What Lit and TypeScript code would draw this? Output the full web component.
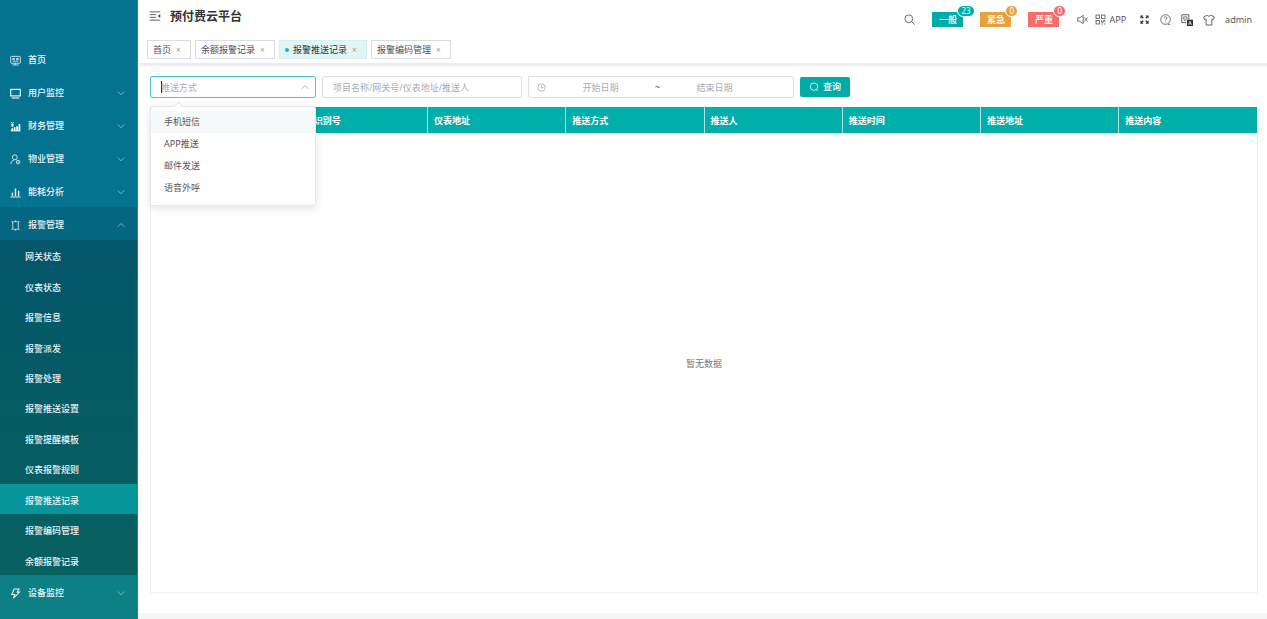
import { LitElement, html, css, svg, nothing, TemplateResult } from "lit";
import { customElement, property } from "lit/decorators.js";
import { classMap } from "lit/directives/class-map.js";

const glyphs: Record<string, TemplateResult> = {
  home: svg`<rect x="1" y="2" width="14" height="10" rx="1"/><path d="M4 5h2.500v2H4zM9.500 5H12v2H9.500zM4 9.500l2-1 2 1 2-1 2 1M8 12v2.300M3.500 14.500h9"/>`,
  screen: svg`<rect x="1" y="2" width="14" height="9.500" stroke-width="1.700"/><path d="M2.500 14.500h11" stroke-width="1.700"/>`,
  finance: svg`<path d="M1.500 1.500l2 2.500 2-2.500M3.500 4v4.500M1.200 5h4.600M1.200 7h4.600M1 14.500h14"/><path d="M2 10.500h2.700v4H2zM5.500 9h2.700v5.500H5.500zM9 7.500h2.700v7H9zM12.400 4.500H15v10h-2.600z" fill="currentColor" stroke="none"/>`,
  person: svg`<circle cx="7" cy="4.800" r="3.500"/><path d="M1.200 14.800c0-3.300 1.800-5.300 4.800-6M9 8l1 1"/><circle cx="11.800" cy="11.800" r="2.600"/><path d="M11.800 10.500v2.500"/>`,
  bars: svg`<path d="M.5 14.500h15" stroke-width="1.400"/><path d="M3.500 13V8M8 13V2M12.500 13V5.500" stroke-width="2"/>`,
  alarm: svg`<path d="M5 2.500h6M5 13.500h6M4 2.500v11M12 2.500v11M2 2.500h2M12 2.500h2M2 13.500h2M12 13.500h2M7 1.500h2M7 14.800h2"/>`,
  bolt: svg`<path d="M6 1.500h7L10.500 6H14L5 14.800 7 9.500H2.500z" stroke-width="1.500"/>`,
  down: svg`<path d="M1.500 5L8 11.500 14.500 5" stroke-width="1.500"/>`,
  up: svg`<path d="M1.500 11.500L8 5l6.500 6.500" stroke-width="1.500"/>`,
  fold: svg`<path d="M1 2.500h14M1 6.200h8.500M1 9.800h8.500M1 13.500h14"/><path d="M15 5.200v5.600L11.500 8z" fill="currentColor" stroke="none"/>`,
  search: svg`<circle cx="7" cy="7" r="5.700"/><path d="M11 11l4.500 4.500"/>`,
  find: svg`<circle cx="8" cy="7.500" r="6"/><path d="M11.500 12l2.500 2.500"/>`,
  mute: svg`<path d="M1 5.500h3l5-3.500v12l-5-3.500H1zM10.500 5l5 6M15.500 5l-5 6"/>`,
  qr: svg`<rect x="1.500" y="1.500" width="5" height="5"/><rect x="9.500" y="1.500" width="5" height="5"/><rect x="1.500" y="9.500" width="5" height="5"/><path d="M9.500 9v3h2.500V9.500h2.500v2M9.500 14.500h2M13 14.500h2"/>`,
  full: svg`<path d="M2 2h4.500L5 3.500 7 5.500 5.500 7l-2-2L2 6.500zM14 2v4.500L12.500 5l-2 2L9 5.500l2-2L9.500 2zM14 14H9.500l1.500-1.500-2-2L10.500 9l2 2L14 9.500zM2 14V9.500L3.500 11l2-2L7 10.500l-2 2L6.500 14z" fill="currentColor" stroke="none"/>`,
  help: svg`<circle cx="8" cy="8" r="7"/><path d="M5.900 6.300c0-2.800 4.200-2.800 4.200-.3 0 1.700-2.100 1.700-2.100 3.300M8 11v1.300M11.500 15h3.500"/>`,
  lang: svg`<path d="M10.500 7V1H1v10.500h6" stroke-width="1"/><path d="M3.500 3.800h4.500v3H3.500zM3.500 9h3" stroke-width=".8"/><rect x="8" y="7.500" width="8" height="8.500" fill="currentColor" stroke="none"/><path d="M10 14.500l2-5 2 5M10.800 13h2.400" stroke="#fff" stroke-width=".9"/>`,
  shirt: svg`<path d="M5.300 1.500L.8 4l1.400 3.500 2-.7v7.900h7.600V6.800l2 .7L15.200 4l-4.500-2.500c-.8 1.900-4.600 1.900-5.400 0z"/>`,
  clock: svg`<circle cx="8" cy="8" r="6.500"/><path d="M8 4v4.300h3.500"/>`,
};

@customElement("ui-icon")
class UiIcon extends LitElement {
  @property() name = "";
  static styles = css`
    :host { display: inline-flex; width: 11px; height: 11px; flex: none; }
    svg { width: 100%; height: 100%; fill: none; stroke: currentColor; stroke-width: 1.2; }
  `;
  render() {
    return html`<svg viewBox="0 0 16 16" aria-hidden="true">${glyphs[this.name]}</svg>`;
  }
}

const menu = [
  { icon: "home", text: "首页", leaf: true },
  { icon: "screen", text: "用户监控" },
  { icon: "finance", text: "财务管理" },
  { icon: "person", text: "物业管理" },
  { icon: "bars", text: "能耗分析" },
  {
    icon: "alarm",
    text: "报警管理",
    children: ["网关状态", "仪表状态", "报警信息", "报警派发", "报警处理", "报警推送设置", "报警提醒模板", "仪表报警规则", "报警推送记录", "报警编码管理", "余额报警记录"],
  },
  { icon: "bolt", text: "设备监控" },
] as { icon: string; text: string; leaf?: boolean; children?: string[] }[];

const current = "报警推送记录";
const tabs = ["首页", "余额报警记录", "报警推送记录", "报警编码管理"];
const alerts = [
  { text: "一般", count: 23, level: "normal" },
  { text: "紧急", count: 0, level: "urgent" },
  { text: "严重", count: 0, level: "severe" },
];
const methods = ["手机短信", "APP推送", "邮件发送", "语音外呼"];
const columns = ["项目名称", "网关识别号", "仪表地址", "推送方式", "推送人", "推送时间", "推送地址", "推送内容"];

@customElement("app-root")
class AppRoot extends LitElement {
  static styles = css`
    * { box-sizing: border-box; }
    :host {
      display: flex;
      min-height: 100vh;
      background: #fff;
      color: #555;
      font: 9px/14px "Noto Sans", "Noto Sans CJK SC", sans-serif;
    }
    button, input, select { font: inherit; color: inherit; margin: 0; border: 0; background: none; padding: 0; outline: 0; border-radius: 0; }
    ul { list-style: none; margin: 0; padding: 0; }
    a { color: inherit; text-decoration: none; }

    .side {
      flex: none;
      width: 138px;
      padding-top: 42px;
      color: #e9f4f6;
      background: linear-gradient(#05728f 0%, #05728f 35%, #0c8084 95%);
      border-right: 1px solid #2b8496;
      font-weight: 500;
    }
    .item { display: flex; align-items: center; gap: 7px; width: 100%; height: 33px; padding: 3px 12px 0 10px; cursor: pointer; text-align: left; }
    .item.open { background: rgba(0, 0, 0, 0.1); }
    .label { flex: 1; }
    .arrow { width: 8px; height: 8px; opacity: 0.7; }
    .sub { display: grid; grid-auto-rows: 1fr; height: 335px; background: linear-gradient(#045669, #08605f); }
    .leaf { display: flex; align-items: center; height: 100%; padding: 4px 0 0 25px; }
    .leaf.on { background: #05959a; }

    .main { flex: 1; min-width: 0; display: flex; flex-direction: column; }
    .top { display: flex; align-items: center; height: 39px; padding: 0 15px 0 11px; }
    .fold { width: 12px; height: 12px; margin-bottom: 7px; }
    .title { margin: 0 auto 6px 9px; font-size: 12px; line-height: 18px; color: #333; font-weight: 600; }
    .search, .alerts, .tools { display: flex; align-items: center; }
    .search { margin-right: 17px; }
    .alerts { gap: 17px; }
    .alert { position: relative; width: 31px; height: 15px; color: #fff; font-weight: 500; line-height: 15px; }
    .count {
      position: absolute; top: -7px; left: 25px; min-width: 12px; height: 12px; padding: 0 3px;
      border: 1px solid #fff; border-radius: 6px; font-size: 8px; line-height: 10px; font-weight: 400;
    }
    .normal, .normal .count { background: #00aca9; }
    .urgent, .urgent .count { background: #e6a23c; }
    .severe, .severe .count { background: #f56c6c; }
    .tools { gap: 10px; margin-left: 18px; }
    .tool { display: flex; align-items: center; gap: 3px; cursor: pointer; }
    .pair { display: flex; gap: 7px; margin-right: 3px; }
    .dark { color: #333; }
    .big { width: 12px; height: 12px; }

    .tabs { display: flex; gap: 4px; height: 24px; padding: 1px 9px 4px; }
    .tab { display: flex; align-items: center; gap: 5px; padding: 0 8px 0 5px; border: 1px solid #d8dce5; color: #495060; }
    .tab.on { background: #e0f5f4; border-color: #d2f0ef; color: #243b46; }
    .dot { width: 4px; height: 4px; border-radius: 50%; background: #1eb5b3; margin-right: -1px; }
    .close { width: 6px; font-size: 8px; line-height: 12px; color: #999; }
    .strip { height: 4px; background: #f5f5f5; border-top: 2px solid #ececec; }

    .page { flex: 1; display: flex; flex-direction: column; padding: 9px 9px 20px 12px; border-bottom: 6px solid #f5f5f5; }
    .filters { display: flex; align-items: center; gap: 6px; height: 22px; margin-bottom: 9px; }
    .field { position: relative; display: flex; align-items: center; height: 22px; padding: 0 10px; border: 1px solid #dcdfe6; border-radius: 2px; }
    .field input { width: 100%; min-width: 0; height: 18px; }
    .field input::placeholder { color: #a8abb2; opacity: 1; }
    .method { width: 166px; padding: 0 6px 0 10px; border-color: #50c6c4; }
    .method .arrow { color: #777; }
    .caret { position: absolute; left: 10px; top: 4px; width: 1px; height: 12px; background: #333; }
    .keyword { width: 200px; }
    .dates { width: 266px; padding: 0 24px 0 8px; }
    .dates input { text-align: center; }
    .clock { width: 9px; height: 9px; color: #999; }
    .query { display: flex; align-items: center; justify-content: center; gap: 4px; width: 50px; height: 20px; border-radius: 2px; background: #00aca9; color: #fff; font-weight: 500; }
    .query ui-icon { width: 10px; height: 10px; }

    .popup { position: absolute; z-index: 2; top: 29px; left: -1px; width: 166px; padding: 4px 0 6px; background: #fff; border: 1px solid #e4e7ed; border-radius: 3px; box-shadow: 0 2px 8px rgba(0, 0, 0, 0.12); }
    .popup::before { content: ""; position: absolute; top: -4px; left: 24px; width: 6px; height: 6px; background: #fff; border: solid #e4e7ed; border-width: 1px 0 0 1px; transform: rotate(45deg); }
    .options { display: block; width: 100%; height: 88px; overflow: hidden; appearance: none; color: #555; }
    .option { height: 22px; min-height: 22px; padding: 4px 13px 0; line-height: 14px; }
    .option.hot { background: #f5f9fa; }

    .board { flex: 1; display: flex; flex-direction: column; border: 1px solid #f0f0f0; border-top: 0; }
    .grid { width: 100%; border-collapse: collapse; table-layout: fixed; background: #00aeaa; }
    .grid th { height: 26px; padding: 2px 6px 0; border-left: 1px solid #b5e2e0; text-align: left; color: #fff; font-weight: 700; }
    .grid th:first-child { border-left: 0; }
    .empty { flex: 1; display: flex; align-items: center; justify-content: center; padding-top: 2px; color: #777; }
  `;

  private item(m: (typeof menu)[number]) {
    return html`<li>
      <button class=${classMap({ item: true, open: !!m.children })}>
        <ui-icon name=${m.icon}></ui-icon><span class="label">${m.text}</span>
        ${m.leaf ? nothing : html`<ui-icon class="arrow" name=${m.children ? "up" : "down"}></ui-icon>`}
      </button>
      ${m.children
        ? html`<ul class="sub">${m.children.map((c) => html`<li><a href="#" class=${classMap({ leaf: true, on: c === current })}>${c}</a></li>`)}</ul>`
        : nothing}
    </li>`;
  }

  render() {
    return html`
      <nav class="side"><ul>${menu.map((m) => this.item(m))}</ul></nav>
      <div class="main">
        <header class="top">
          <ui-icon class="fold" name="fold"></ui-icon>
          <h1 class="title">预付费云平台</h1>
          <button class="search" aria-label="搜索"><ui-icon name="search"></ui-icon></button>
          <div class="alerts">
            ${alerts.map((a) => html`<button class="alert ${a.level}">${a.text}<span class="count">${a.count}</span></button>`)}
          </div>
          <div class="tools">
            <span class="pair">
              <button class="tool" aria-label="静音"><ui-icon name="mute"></ui-icon></button>
              <button class="tool"><ui-icon name="qr"></ui-icon>APP</button>
            </span>
            <button class="tool dark" aria-label="全屏"><ui-icon name="full"></ui-icon></button>
            <button class="tool" aria-label="帮助"><ui-icon name="help"></ui-icon></button>
            <button class="tool dark" aria-label="语言"><ui-icon class="big" name="lang"></ui-icon></button>
            <button class="tool" aria-label="主题"><ui-icon class="big" name="shirt"></ui-icon></button>
            <button class="tool">admin</button>
          </div>
        </header>
        <div class="tabs">
          ${tabs.map((t) => html`<a href="#" class=${classMap({ tab: true, on: t === current })}>
            ${t === current ? html`<span class="dot"></span>` : nothing}<span>${t}</span><span class="close">×</span></a>`)}
        </div>
        <div class="strip"></div>
        <main class="page">
          <form class="filters">
            <div class="field method">
              <input type="text" role="combobox" aria-expanded="true" aria-label="推送方式" placeholder="推送方式" />
              <span class="caret"></span>
              <ui-icon class="arrow" name="up"></ui-icon>
              <div class="popup">
                <select class="options" size="4" aria-label="推送方式">
                  ${methods.map((m, i) => html`<option class=${classMap({ option: true, hot: i === 0 })}>${m}</option>`)}
                </select>
              </div>
            </div>
            <div class="field keyword">
              <input type="text" aria-label="关键字" placeholder="项目名称/网关号/仪表地址/推送人" />
            </div>
            <div class="field dates">
              <ui-icon class="clock" name="clock"></ui-icon>
              <input type="text" aria-label="开始日期" placeholder="开始日期" />
              <span>~</span>
              <input type="text" aria-label="结束日期" placeholder="结束日期" />
            </div>
            <button class="query" type="button"><ui-icon name="find"></ui-icon>查询</button>
          </form>
          <section class="board">
            <table class="grid">
              <thead><tr>${columns.map((c) => html`<th scope="col">${c}</th>`)}</tr></thead>
            </table>
            <div class="empty">暂无数据</div>
          </section>
        </main>
      </div>
    `;
  }
}
